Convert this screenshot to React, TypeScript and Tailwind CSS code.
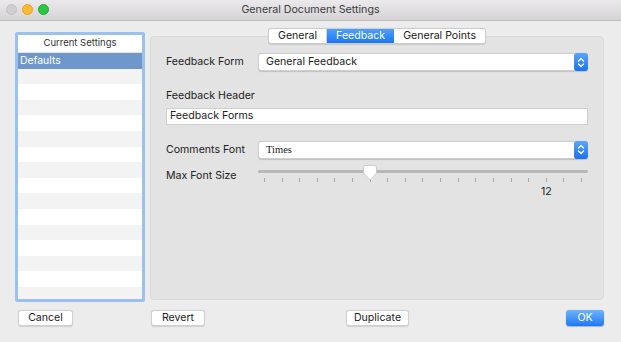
import React, { useState } from "react";

const font = { fontFamily: "Inter, 'Liberation Sans', sans-serif" };

function Stepper() {
  return (
    <div className="w-[14px] self-stretch -my-px -mr-px rounded-[3px] bg-gradient-to-b from-[#5aa5fb] to-[#1a71f2] flex items-center justify-center">
      <svg width="8" height="11" viewBox="0 0 8 11" fill="none">
        <path d="M1.5 4L4 1.5L6.5 4" stroke="white" strokeWidth="1.3" strokeLinecap="round" strokeLinejoin="round" />
        <path d="M1.5 7L4 9.5L6.5 7" stroke="white" strokeWidth="1.3" strokeLinecap="round" strokeLinejoin="round" />
      </svg>
    </div>
  );
}

function Popup({ value, serif }: { value: string; serif?: boolean }) {
  return (
    <div className="flex-1 h-[18px] flex items-center bg-white rounded-[3px] border border-[#cfcfcf] shadow-[0_0.5px_1px_rgba(0,0,0,0.15)]">
      <span
        className={
          serif
            ? "flex-1 pl-[7px] text-[10.5px] text-[#222] font-['Liberation_Serif',serif]"
            : "flex-1 pl-[7px] text-[10.6px] text-[#222]"
        }
      >
        {value}
      </span>
      <Stepper />
    </div>
  );
}

function Button({ label, width, primary }: { label: string; width: string; primary?: boolean }) {
  return (
    <button
      className={twClass(
        primary
          ? "h-[16px] rounded-[3px] bg-gradient-to-b from-[#6cb3fc] to-[#1b78f4] text-white text-[10.6px] leading-none shadow-[0_0.5px_1px_rgba(0,0,0,0.25)]"
          : "h-[16px] rounded-[3px] bg-white border border-[#d0d0d0] text-[#222] text-[10.6px] leading-none shadow-[0_0.5px_1px_rgba(0,0,0,0.12)]",
        width,
      )}
    >
      {label}
    </button>
  );
}

function twClass(...parts: string[]) {
  return parts.join(" ");
}

const ticks = Array.from({ length: 19 }, (_, i) => i);

export default function App() {
  const [tab, setTab] = useState("Feedback");
  const rows = Array.from({ length: 15 }, (_, i) => i);

  return (
    <div className="w-[621px] h-[342px] bg-[#ececec] flex flex-col overflow-hidden" style={font}>
      {/* title bar */}
      <div className="h-[21px] shrink-0 relative flex items-center justify-center bg-gradient-to-b from-[#ebe9eb] to-[#d5d3d5] border-b border-[#bdbdbd]">
        <div className="absolute left-[6px] top-[4px] flex gap-[5px]">
          <span className="w-[11px] h-[11px] rounded-full bg-[#d0ced0] border border-[#c2c0c2]" />
          <span className="w-[11px] h-[11px] rounded-full bg-[#fdbc2f] border border-[#e2a325]" />
          <span className="w-[11px] h-[11px] rounded-full bg-[#28c840] border border-[#1eac2e]" />
        </div>
        <span className="text-[10.7px] text-[#3c3c3c]">General Document Settings</span>
      </div>

      <div className="h-[281px] shrink-0 flex gap-[5px] pl-[15px] pr-[17px] pt-[11px]">
        {/* settings list */}
        <div className="w-[130px] h-[270px] rounded-[2px] border-[3px] border-[#9bc1ee] bg-white flex flex-col overflow-hidden">
          <div className="h-[18px] shrink-0 flex items-center justify-center text-[9.5px] text-[#333] border-b border-[#e4e4e4]">
            Current Settings
          </div>
          <div className="h-[15.6px] shrink-0 flex items-center pl-[2px] bg-[#7097cc] text-white text-[10.4px]">
            Defaults
          </div>
          {rows.map((i) => (
            <div key={i} className={i % 2 === 0 ? "h-[15.6px] shrink-0 bg-[#f3f3f3]" : "h-[15.6px] shrink-0 bg-white"} />
          ))}
        </div>

        {/* right side */}
        <div className="flex-1 flex flex-col -mt-[4px]">
          <div className="flex justify-center relative z-10">
            <div className="flex h-[16px] rounded-[3px] bg-white border border-[#cdcdcd] shadow-[0_0.5px_1px_rgba(0,0,0,0.12)] overflow-hidden text-[10.6px]">
              {["General", "Feedback", "General Points"].map((t) => (
                <button
                  key={t}
                  onClick={() => setTab(t)}
                  className={
                    tab === t
                      ? "px-[9px] flex items-center bg-gradient-to-b from-[#4fa0fb] to-[#1b74f2] text-white"
                      : "px-[9px] flex items-center text-[#222] border-r border-[#d6d6d6] last:border-r-0"
                  }
                >
                  {t}
                </button>
              ))}
            </div>
          </div>

          <div className="-mt-[8px] h-[264px] rounded-[4px] bg-[#e3e3e3] border border-[#dadada] px-[15px] pt-[16px] text-[10.6px] text-[#222]">
            <div className="flex items-center">
              <span className="w-[92px]">Feedback Form</span>
              <Popup value="General Feedback" />
            </div>

            <div className="mt-[17px]">Feedback Header</div>
            <div className="mt-[4px] h-[17px] bg-white border border-[#cfcfcf] flex items-center pl-[3px]">
              Feedback Forms
            </div>

            <div className="mt-[16px] flex items-center">
              <span className="w-[92px]">Comments Font</span>
              <Popup value="Times" serif />
            </div>

            <div className="mt-[6px] flex">
              <span className="w-[92px] pt-[3px]">Max Font Size</span>
              <div className="flex-1 relative h-[30px]">
                <div className="absolute left-0 right-0 top-[5px] h-[3px] rounded-full bg-[#b8b8b8]" />
                <div className="absolute left-[6px] right-[6px] top-[13px] flex justify-between">
                  {ticks.map((i) => (
                    <span key={i} className="w-px h-[4px] bg-[#a6a6a6]" />
                  ))}
                </div>
                <svg className="absolute left-[105px] top-0" width="14" height="16" viewBox="0 0 14 16">
                  <path
                    d="M2.5 0.5H11.5Q13.5 0.5 13.5 2.5V8L7 15L0.5 8V2.5Q0.5 0.5 2.5 0.5Z"
                    fill="white"
                    stroke="#c4c4c4"
                    strokeWidth="0.8"
                  />
                </svg>
                <span className="absolute left-[283px] top-[19px] text-[10.6px]">12</span>
              </div>
            </div>
          </div>
        </div>
      </div>

      {/* bottom buttons */}
      <div className="flex-1 flex items-start pt-[8px] pl-[18px] pr-[17px]">
        <Button label="Cancel" width="w-[55px]" />
        <div className="ml-[78px] flex">
          <Button label="Revert" width="w-[54px]" />
        </div>
        <div className="ml-[141px] flex">
          <Button label="Duplicate" width="w-[63px]" />
        </div>
        <div className="ml-auto flex">
          <Button label="OK" width="w-[38px]" primary />
        </div>
      </div>
    </div>
  );
}
